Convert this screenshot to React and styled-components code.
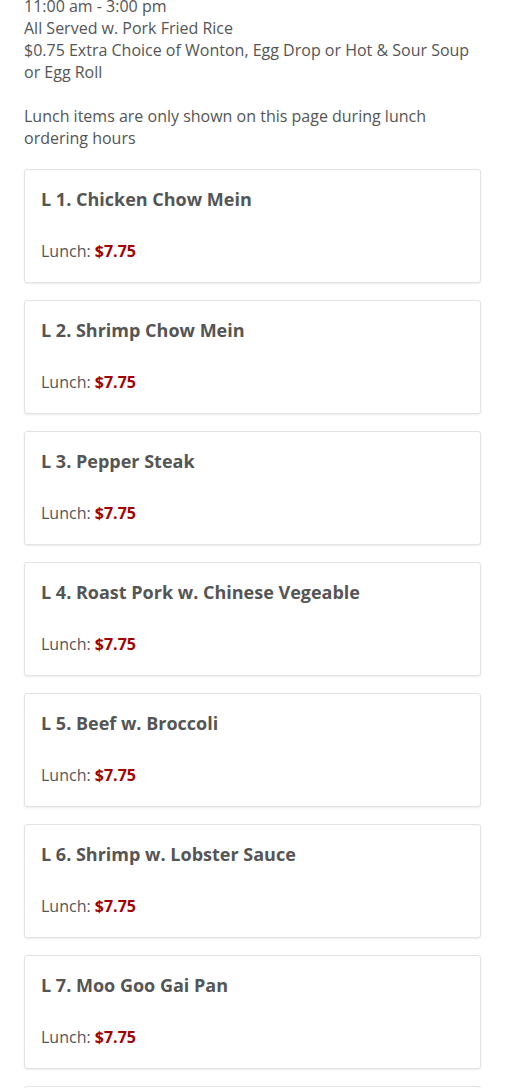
import React from "react";
import styled, { createGlobalStyle } from "styled-components";

const Global = createGlobalStyle`
  html, body { margin: 0; padding: 0; background: #fff; }
  body { font-family: "Open Sans", "Liberation Sans", sans-serif; color: #555; }
`;

const Page = styled.div`
  width: 457px;
  padding: 0 0 0 24px;
  margin-top: -5px;
`;

const Intro = styled.div`
  font-size: 16px;
  line-height: 22px;
  color: #555;
`;

const Line = styled.div`
  min-height: 22px;
`;

const List = styled.div`
  display: flex;
  flex-direction: column;
  gap: 17px;
  margin-top: 20px;
`;

const Card = styled.div`
  border: 1px solid #e3e3e3;
  border-radius: 3px;
  box-shadow: 0 1px 2px rgba(0, 0, 0, 0.08);
  padding: 16px 16px 20px 16px;
  background: #fff;
`;

const Title = styled.div`
  font-size: 18px;
  line-height: 26px;
  font-weight: 700;
  color: #555;
`;

const Price = styled.div`
  margin-top: 28px;
  font-size: 16px;
  line-height: 22px;
  color: #555;
`;

const Amount = styled.span`
  color: #a30000;
  font-weight: 700;
`;

const items = [
  "L 1. Chicken Chow Mein",
  "L 2. Shrimp Chow Mein",
  "L 3. Pepper Steak",
  "L 4. Roast Pork w. Chinese Vegeable",
  "L 5. Beef w. Broccoli",
  "L 6. Shrimp w. Lobster Sauce",
  "L 7. Moo Goo Gai Pan",
  "L 8. Sweet & Sour Chicken",
];

export default function App() {
  return (
    <>
      <Global />
      <Page>
        <Intro>
          <Line>11:00 am - 3:00 pm</Line>
          <Line>All Served w. Pork Fried Rice</Line>
          <Line>$0.75 Extra Choice of Wonton, Egg Drop or Hot &amp; Sour Soup or Egg Roll</Line>
          <Line />
          <Line>Lunch items are only shown on this page during lunch ordering hours</Line>
        </Intro>
        <List>
          {items.map((t) => (
            <Card key={t}>
              <Title>{t}</Title>
              <Price>
                Lunch: <Amount>$7.75</Amount>
              </Price>
            </Card>
          ))}
        </List>
      </Page>
    </>
  );
}
